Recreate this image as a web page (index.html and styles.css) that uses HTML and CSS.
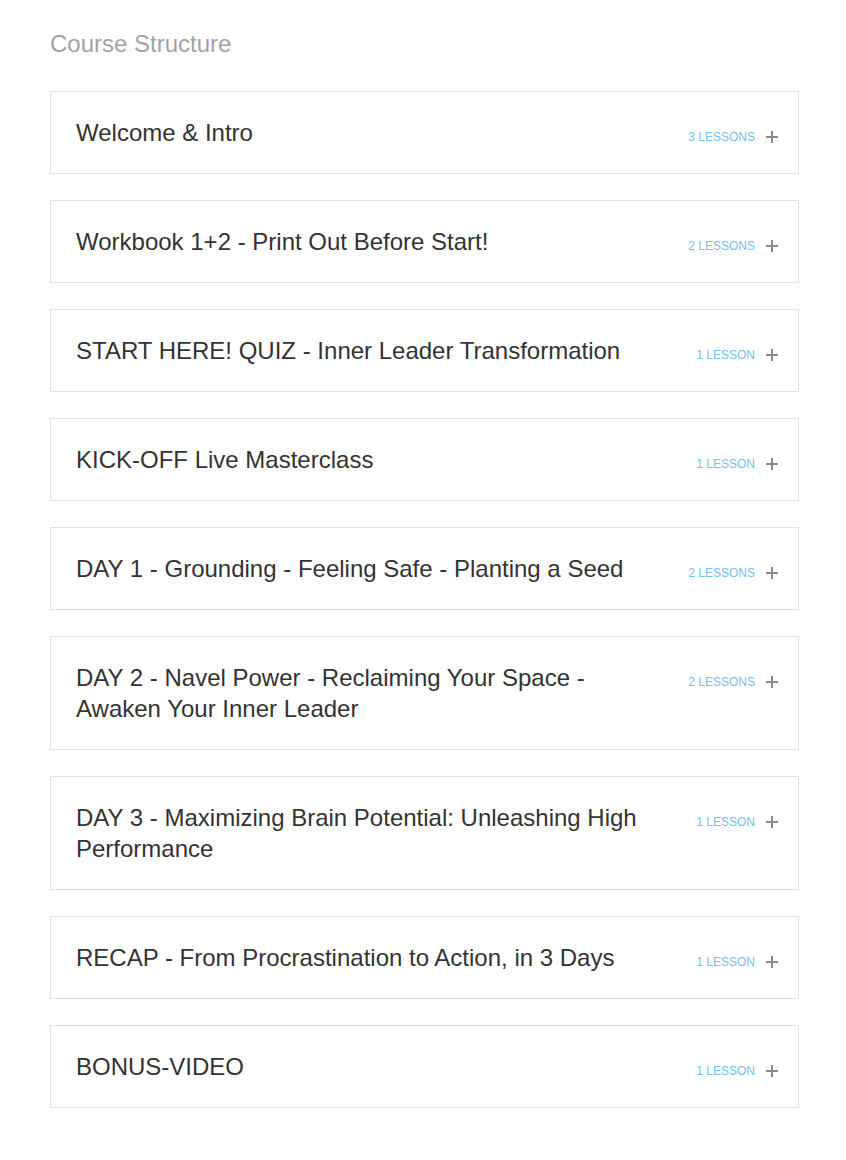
FILE: index.html
```html
<!DOCTYPE html>
<html lang="en">

<head>
    <meta charset="UTF-8">
    <meta name="viewport" content="width=device-width, initial-scale=1.0">
    <title>Course Structure</title>
    <link rel="stylesheet" href="styles.css">
</head>

<body>
    <div class="course">
        <h2 class="course-heading">Course Structure</h2>

        <div class="section">
            <div class="section-title">Welcome &amp; Intro</div>
            <div class="section-meta">
                <span class="lessons">3 Lessons</span>
                <span class="plus"></span>
            </div>
        </div>

        <div class="section">
            <div class="section-title">Workbook 1+2 - Print Out Before Start!</div>
            <div class="section-meta">
                <span class="lessons">2 Lessons</span>
                <span class="plus"></span>
            </div>
        </div>

        <div class="section">
            <div class="section-title">START HERE! QUIZ - Inner Leader Transformation</div>
            <div class="section-meta">
                <span class="lessons">1 Lesson</span>
                <span class="plus"></span>
            </div>
        </div>

        <div class="section">
            <div class="section-title">KICK-OFF Live Masterclass</div>
            <div class="section-meta">
                <span class="lessons">1 Lesson</span>
                <span class="plus"></span>
            </div>
        </div>

        <div class="section">
            <div class="section-title">DAY 1 - Grounding - Feeling Safe - Planting a Seed</div>
            <div class="section-meta">
                <span class="lessons">2 Lessons</span>
                <span class="plus"></span>
            </div>
        </div>

        <div class="section">
            <div class="section-title">DAY 2 - Navel Power - Reclaiming Your Space - Awaken Your Inner Leader</div>
            <div class="section-meta">
                <span class="lessons">2 Lessons</span>
                <span class="plus"></span>
            </div>
        </div>

        <div class="section">
            <div class="section-title">DAY 3 - Maximizing Brain Potential: Unleashing High Performance</div>
            <div class="section-meta">
                <span class="lessons">1 Lesson</span>
                <span class="plus"></span>
            </div>
        </div>

        <div class="section">
            <div class="section-title">RECAP - From Procrastination to Action, in 3 Days</div>
            <div class="section-meta">
                <span class="lessons">1 Lesson</span>
                <span class="plus"></span>
            </div>
        </div>

        <div class="section">
            <div class="section-title">BONUS-VIDEO</div>
            <div class="section-meta">
                <span class="lessons">1 Lesson</span>
                <span class="plus"></span>
            </div>
        </div>
    </div>
</body>

</html>
```

FILE: styles.css
```css
body {
    margin: 0;
    font-family: "Liberation Sans", Arial, sans-serif;
    color: #333;
    background: #fff;
}

.course {
    width: 749px;
    margin-left: 50px;
    padding-top: 29px;
}

.course-heading {
    margin: 0 0 32px;
    font-size: 24px;
    font-weight: normal;
    line-height: 30px;
    color: #a3a3a3;
}

.section {
    display: flex;
    align-items: flex-start;
    margin-bottom: 26px;
    padding: 25px 20px 25px 25px;
    border: 1px solid #e3e3e3;
}

.section-title {
    flex: 1;
    padding-right: 20px;
    font-size: 24px;
    line-height: 31px;
}

.section-meta {
    display: flex;
    align-items: center;
    justify-content: flex-end;
    gap: 11px;
    width: 100px;
    padding-top: 9px;
    line-height: 22px;
}

.lessons {
    font-size: 12px;
    text-transform: uppercase;
    color: #72c2ec;
}

.plus {
    position: relative;
    width: 12px;
    height: 12px;
}

.plus::before,
.plus::after {
    content: "";
    position: absolute;
    background: #8a8a8a;
}

.plus::before {
    left: 0;
    top: 5px;
    width: 12px;
    height: 1.5px;
}

.plus::after {
    left: 5.25px;
    top: 0;
    width: 1.5px;
    height: 12px;
}
```
